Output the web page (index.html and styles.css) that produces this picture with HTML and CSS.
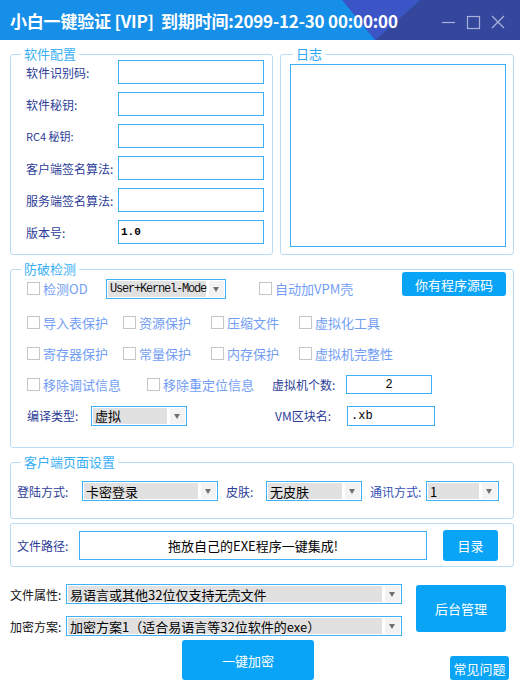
FILE: index.html
```html
<!DOCTYPE html>
<html lang="zh-CN">
<head>
<meta charset="UTF-8">
<title>小白一键验证</title>
<link rel="stylesheet" href="styles.css">
</head>
<body>
<div class="titlebar">
    <svg class="title-bg" width="520" height="40" viewBox="0 0 520 40">
        <polygon points="342,0 420,0 375,40" fill="#3c55c6"/>
        <polygon points="420,0 520,0 520,40 375,40" fill="#34479d"/>
    </svg>
    <span class="title">小白一键验证 [VIP]  到期时间:2099-12-30 00:00:00</span>
    <svg class="winctl" width="84" height="40" viewBox="0 0 84 40" fill="none" stroke="#a9b1d8" stroke-width="1.2">
        <line x1="6" y1="22.5" x2="19" y2="22.5"/>
        <rect x="31.5" y="16.5" width="12" height="12"/>
        <line x1="56" y1="16" x2="68" y2="28"/>
        <line x1="68" y1="16" x2="56" y2="28"/>
    </svg>
</div>

<div class="main">
    <div class="top-row">
        <fieldset class="group group-config">
            <legend>软件配置</legend>
            <div class="config-body">
                <div class="field"><label>软件识别码:</label><input type="text"></div>
                <div class="field"><label>软件秘钥:</label><input type="text"></div>
                <div class="field"><label class="mono-label">RC4 秘钥:</label><input type="text"></div>
                <div class="field"><label>客户端签名算法:</label><input type="text"></div>
                <div class="field"><label>服务端签名算法:</label><input type="text"></div>
                <div class="field"><label>版本号:</label><input type="text" value="1.0"></div>
            </div>
        </fieldset>
        <fieldset class="group group-log">
            <legend>日志</legend>
            <div class="log-body"><div class="log-box"></div></div>
        </fieldset>
    </div>

    <fieldset class="group group-protect">
        <legend>防破检测</legend>
        <div class="protect-body">
            <div class="prow prow-first">
                <div class="chk w79"><span class="box"></span>检测OD</div>
                <div class="combo w120"><span class="combo-text mono">User+Kernel-Mode</span><span class="combo-arrow"></span></div>
                <div class="chk vpm"><span class="box"></span>自动加VPM壳</div>
                <button class="btn btn-source">你有程序源码</button>
            </div>
            <div class="prow">
                <div class="chk w96"><span class="box"></span>导入表保护</div>
                <div class="chk w88"><span class="box"></span>资源保护</div>
                <div class="chk w88"><span class="box"></span>压缩文件</div>
                <div class="chk"><span class="box"></span>虚拟化工具</div>
            </div>
            <div class="prow">
                <div class="chk w96"><span class="box"></span>寄存器保护</div>
                <div class="chk w88"><span class="box"></span>常量保护</div>
                <div class="chk w88"><span class="box"></span>内存保护</div>
                <div class="chk"><span class="box"></span>虚拟机完整性</div>
            </div>
            <div class="prow">
                <div class="chk w120"><span class="box"></span>移除调试信息</div>
                <div class="chk w125"><span class="box"></span>移除重定位信息</div>
                <label class="lbl w74">虚拟机个数:</label>
                <input type="text" class="small-input vm-count" value="2">
            </div>
            <div class="prow">
                <label class="lbl w64">编译类型:</label>
                <div class="combo w96"><span class="combo-text">虚拟</span><span class="combo-arrow"></span></div>
                <label class="lbl w72 vm-name-label">VM区块名:</label>
                <input type="text" class="small-input vm-name" value=".xb">
            </div>
        </div>
    </fieldset>

    <fieldset class="group group-client">
        <legend>客户端页面设置</legend>
        <div class="client-body">
            <label class="lbl w65">登陆方式:</label>
            <div class="combo w136"><span class="combo-text">卡密登录</span><span class="combo-arrow"></span></div>
            <label class="lbl skin-label">皮肤:</label>
            <div class="combo w96"><span class="combo-text">无皮肤</span><span class="combo-arrow"></span></div>
            <label class="lbl comm-label">通讯方式:</label>
            <div class="combo w73"><span class="combo-text">1</span><span class="combo-arrow"></span></div>
        </div>
    </fieldset>

    <div class="pathbox">
        <label class="lbl w62">文件路径:</label>
        <input type="text" class="path-input" value="拖放自己的EXE程序一键集成!">
        <button class="btn btn-dir">目录</button>
    </div>

    <div class="bottom">
        <div class="attr-col">
            <div class="attr-row">
                <label class="attr-label">文件属性:</label>
                <div class="combo w336"><span class="combo-text">易语言或其他32位仅支持无壳文件</span><span class="combo-arrow"></span></div>
            </div>
            <div class="attr-row">
                <label class="attr-label">加密方案:</label>
                <div class="combo w336"><span class="combo-text">加密方案1（适合易语言等32位软件的exe）</span><span class="combo-arrow"></span></div>
            </div>
        </div>
        <button class="btn btn-admin">后台管理</button>
    </div>

    <div class="bottom2">
        <button class="btn btn-encrypt">一键加密</button>
        <button class="btn btn-faq">常见问题</button>
    </div>
</div>
</body>
</html>
```

FILE: styles.css
```css
body {
    margin: 0;
    width: 520px;
    height: 684px;
    overflow: hidden;
    background-color: #fff;
    font-family: "Noto Sans CJK SC", "Noto Sans", sans-serif;
    font-size: 12px;
}
.titlebar {
    position: relative;
    height: 40px;
    background-color: #168fe9;
    display: flex;
    align-items: center;
}
.title-bg {
    position: absolute;
    left: 0;
    top: 0;
}
.title {
    position: relative;
    margin-left: 10px;
    color: #fff;
    font-size: 17px;
    font-weight: bold;
    letter-spacing: -0.2px;
    white-space: pre;
}
.winctl {
    position: relative;
    margin-left: auto;
}
.main {
    padding: 0 6px 0 10px;
}
.group {
    margin: 0;
    padding: 0;
    min-width: 0;
    box-sizing: border-box;
    border: 1px solid #b9dcf4;
    border-radius: 3px;
}
.group legend {
    margin-left: 10px;
    padding: 0 3px;
    font-size: 13px;
    line-height: 12px;
    color: #3aaff5;
}
.top-row {
    display: flex;
    gap: 7px;
    margin-top: 8px;
}
.group-config {
    width: 263px;
}
.group-log {
    width: 234px;
}
.group-log legend {
    margin-left: 12px;
    color: #2ea6f5;
}
.config-body {
    display: flex;
    flex-direction: column;
    gap: 8px;
    padding: 0 8px 10px 15px;
}
.field {
    display: flex;
    align-items: center;
    height: 24px;
}
.field label {
    width: 92px;
    color: #2c3d98;
    white-space: nowrap;
}
.field label.mono-label {
    font-size: 11px;
}
.field input {
    width: 146px;
    height: 24px;
    box-sizing: border-box;
    border: 1px solid #3bb0f4;
    padding: 0 2px;
    font-family: "Liberation Mono", monospace;
    font-size: 11px;
    font-weight: bold;
    color: #000;
    outline: none;
}
.log-body {
    padding: 4px 7px 7px 9px;
}
.log-box {
    height: 183px;
    box-sizing: border-box;
    border: 1px solid #3bb0f4;
}
.group-protect {
    margin-top: 8px;
}
.protect-body {
    display: flex;
    flex-direction: column;
    gap: 4px;
    padding: 0 7px 18px 16px;
}
.prow {
    display: flex;
    align-items: center;
    height: 27px;
}
.prow-first {
    margin-bottom: 3px;
}
.chk {
    display: flex;
    align-items: center;
    gap: 3px;
    font-size: 13px;
    color: #739ef4;
    white-space: nowrap;
}
.chk .box {
    width: 13px;
    height: 13px;
    box-sizing: border-box;
    border: 1px solid #c6c6c6;
    background-color: #fff;
}
.chk.vpm {
    margin-left: 33px;
}
.lbl {
    color: #2c3d98;
    white-space: nowrap;
}
.w62 { width: 62px; }
.w64 { width: 64px; }
.w65 { width: 65px; }
.w72 { width: 72px; }
.w73 { width: 73px; }
.w74 { width: 74px; }
.w79 { width: 79px; }
.w88 { width: 88px; }
.w96 { width: 96px; }
.w120 { width: 120px; }
.w125 { width: 125px; }
.w136 { width: 136px; }
.w336 { width: 336px; }
.vm-name-label {
    margin-left: 88px;
}
.small-input {
    height: 19px;
    box-sizing: border-box;
    border: 1px solid #3bb0f4;
    padding: 0 3px;
    font-family: "Liberation Mono", monospace;
    font-size: 12px;
    color: #000;
    outline: none;
}
.vm-count {
    width: 86px;
    text-align: center;
}
.vm-name {
    width: 88px;
    height: 20px;
}
.combo {
    display: flex;
    height: 20px;
    box-sizing: border-box;
    border: 1px solid #3eb2f4;
    padding: 1px;
    background-color: #fff;
}
.combo-text {
    flex: 1;
    display: flex;
    align-items: center;
    white-space: nowrap;
    padding-left: 2px;
    background-color: #e1e1e1;
    font-size: 13px;
    color: #000;
}
.combo-text.mono {
    font-family: "Liberation Mono", monospace;
    font-size: 12px;
    letter-spacing: -1.2px;
    color: #111;
}
.combo-arrow {
    position: relative;
    width: 15px;
    margin-left: 3px;
    background-color: #f3f3f3;
}
.combo-arrow::after {
    content: "";
    position: absolute;
    left: 4px;
    top: 6px;
    border-top: 5px solid #707070;
    border-left: 3.5px solid transparent;
    border-right: 3.5px solid transparent;
}
.btn {
    border: none;
    border-radius: 3px;
    padding: 0;
    background-color: #0aa4f6;
    color: #fff;
    font-family: "Noto Sans CJK SC", "Noto Sans", sans-serif;
    font-size: 13px;
    cursor: pointer;
}
.btn-source {
    margin-left: auto;
    align-self: flex-start;
    margin-top: -3px;
    width: 104px;
    height: 24px;
}
.group-client {
    margin-top: 8px;
}
.client-body {
    display: flex;
    align-items: center;
    padding: 13px 0 17px 6px;
}
.skin-label {
    width: 40px;
    margin-left: 8px;
}
.comm-label {
    width: 56px;
    margin-left: 8px;
    color: #3553b5;
}
.pathbox {
    display: flex;
    align-items: center;
    height: 44px;
    box-sizing: border-box;
    margin-top: 4px;
    padding-left: 6px;
    border: 1px solid #b9dcf4;
    border-radius: 3px;
}
.path-input {
    width: 348px;
    height: 29px;
    box-sizing: border-box;
    border: 1px solid #3bb0f4;
    text-align: center;
    font-family: "Noto Sans CJK SC", sans-serif;
    font-size: 13px;
    color: #000;
    outline: none;
}
.btn-dir {
    margin-left: 16px;
    width: 55px;
    height: 31px;
}
.bottom {
    display: flex;
    margin-top: 17px;
}
.attr-col {
    display: flex;
    flex-direction: column;
    gap: 12px;
}
.attr-row {
    display: flex;
    align-items: center;
    height: 20px;
}
.attr-label {
    width: 56px;
    color: #111;
    white-space: nowrap;
}
.btn-admin {
    margin-left: 14px;
    margin-top: 1px;
    width: 90px;
    height: 47px;
}
.bottom2 {
    display: flex;
    margin-top: 4px;
}
.btn-encrypt {
    margin-left: 172px;
    width: 132px;
    height: 40px;
}
.btn-faq {
    align-self: flex-end;
    margin-left: 136px;
    width: 59px;
    height: 24px;
}
```
